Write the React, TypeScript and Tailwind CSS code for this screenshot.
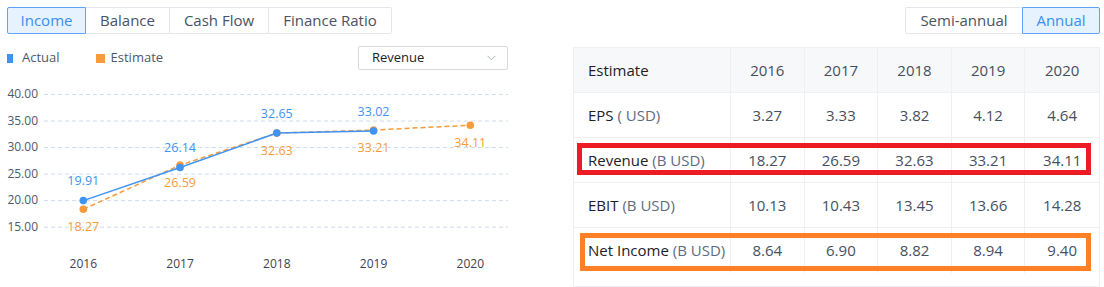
import React from "react";

const years = [2016, 2017, 2018, 2019, 2020];
const actual: (number | null)[] = [19.91, 26.14, 32.65, 33.02, null];
const estimate = [18.27, 26.59, 32.63, 33.21, 34.11];

const BLUE = "#3e93f5";
const ORANGE = "#f89b3c";

const px = (i: number) => 83.3 + 96.75 * i;
const py = (v: number) => 94 + (40 - v) * 5.307;

function Chart() {
  const ticks = [40, 35, 30, 25, 20, 15];
  const actPts = actual
    .map((v, i) => (v == null ? null : `${px(i)},${py(v)}`))
    .filter(Boolean)
    .join(" ");
  const estPts = estimate.map((v, i) => `${px(i)},${py(v)}`).join(" ");
  return (
    <svg width={512} height={217} className="-ml-[7px] block" style={{ fontFamily: "'Open Sans', sans-serif" }}>
      <g transform="translate(0,-70)">
        {ticks.map((t) => (
          <g key={t}>
            <line x1={44} x2={508} y1={py(t) + 0.5} y2={py(t) + 0.5} stroke="#cfdbea" strokeWidth={1} strokeDasharray="4 3" />
            <text x={38} y={py(t) + 4.3} textAnchor="end" fontSize={12} fill="#4e5969">
              {t.toFixed(2)}
            </text>
          </g>
        ))}
        {years.map((y, i) => (
          <text key={y} x={px(i)} y={268.3} textAnchor="middle" fontSize={12} fill="#3d4350">
            {y}
          </text>
        ))}
        <polyline points={estPts} fill="none" stroke={ORANGE} strokeWidth={1.5} strokeDasharray="5 3" />
        <polyline points={actPts} fill="none" stroke={BLUE} strokeWidth={1.5} />
        {estimate.map((v, i) => (
          <g key={"e" + i}>
            <circle cx={px(i)} cy={py(v)} r={3.8} fill={ORANGE} />
            <text x={px(i)} y={py(v) + 17.5 + 4.3} textAnchor="middle" fontSize={12.5} fill={ORANGE}>
              {v.toFixed(2)}
            </text>
          </g>
        ))}
        {actual.map((v, i) =>
          v == null ? null : (
            <g key={"a" + i}>
              <circle cx={px(i)} cy={py(v)} r={3.8} fill={BLUE} />
              <text x={px(i)} y={py(v) - 19.5 + 4.3} textAnchor="middle" fontSize={12.5} fill={BLUE}>
                {v.toFixed(2)}
              </text>
            </g>
          )
        )}
      </g>
    </svg>
  );
}

const rows: { label: string; unit: string; values: string[] }[] = [
  { label: "EPS", unit: " ( USD)", values: ["3.27", "3.33", "3.82", "4.12", "4.64"] },
  { label: "Revenue", unit: " (B USD)", values: ["18.27", "26.59", "32.63", "33.21", "34.11"] },
  { label: "EBIT", unit: " (B USD)", values: ["10.13", "10.43", "13.45", "13.66", "14.28"] },
  { label: "Net Income", unit: " (B USD)", values: ["8.64", "6.90", "8.82", "8.94", "9.40"] },
];

const tabs: { t: string; w: string }[] = [
  { t: "Income", w: "w-[79px]" },
  { t: "Balance", w: "w-[84px]" },
  { t: "Cash Flow", w: "w-[99px]" },
  { t: "Finance Ratio", w: "w-[123px]" },
];

export default function App() {
  return (
    <div className="relative w-[1104px] h-[287px] bg-white font-['Open_Sans',sans-serif] text-[#4e5969] overflow-hidden">
      <div className="flex justify-between pl-[7px] pr-[4px] pt-[7px]">
        <div className="flex">
          {tabs.map((tab, i) => (
            <div
              key={tab.t}
              className={
                tab.w +
                " h-[27px] flex items-center justify-center text-[15px] border " +
                (i === 0
                  ? "bg-[#e6f2fe] border-[#5ea6f5] text-[#3a8ef0] rounded-l-[2px]"
                  : "border-[#e5e6eb] border-l-0 text-[#4a5263]") +
                (i === tabs.length - 1 ? " rounded-r-[2px]" : "")
              }
            >
              {tab.t}
            </div>
          ))}
        </div>
        <div className="flex">
          <div className="h-[27px] w-[117px] flex items-center justify-center text-[15px] border border-[#e5e6eb] border-r-0 rounded-l-[2px] text-[#4a5263]">
            Semi-annual
          </div>
          <div className="h-[27px] w-[78px] flex items-center justify-center text-[15px] border border-[#5ea6f5] bg-[#e6f2fe] text-[#3a8ef0] rounded-r-[2px]">
            Annual
          </div>
        </div>
      </div>

      <div className="flex justify-between pl-[7px] pr-[4px] mt-[12px]">
        <div className="w-[503px]">
          <div className="h-[24px] flex items-center justify-between">
            <div className="flex items-center text-[13px] text-[#4e5969]">
              <span className="w-[6px] h-[9px] bg-[#3e93f5] mr-[9px]" />
              <span>Actual</span>
              <span className="w-[9px] h-[9px] bg-[#f89b3c] ml-[36px] mr-[6px]" />
              <span>Estimate</span>
            </div>
            <div className="w-[150px] h-[24px] mr-[2px] border border-[#d9d9d9] rounded-[2px] flex items-center justify-between pl-[13px] pr-[11px] text-[13px] text-[#1d2129]">
              <span>Revenue</span>
              <svg width="9" height="6" viewBox="0 0 9 6">
                <path d="M0.5 0.8 L4.5 4.8 L8.5 0.8" fill="none" stroke="#a9aeb8" strokeWidth="1" />
              </svg>
            </div>
          </div>
          <Chart />
        </div>

        <div className="w-[527px] mt-[1px] border border-[#eef0f3] text-[15px]">
          <div className="grid grid-cols-[157px_repeat(5,1fr)] h-[45px] bg-[#f7f8fa] border-b border-[#eef0f3]">
            <div className="flex items-center pl-[14px] text-[#1d2129] border-r border-[#eef0f3]">Estimate</div>
            {years.map((y, i) => (
              <div
                key={y}
                className={"flex items-center justify-center text-[#464f5f] " + (i < 4 ? "border-r border-[#eef0f3]" : "")}
              >
                {y}
              </div>
            ))}
          </div>
          {rows.map((r, ri) => (
            <div
              key={r.label}
              className={
                "grid grid-cols-[157px_repeat(5,1fr)] h-[45px] " +
                (ri < rows.length - 1 ? "border-b border-[#eef0f3]" : "h-[44px]")
              }
            >
              <div className="flex items-center pl-[14px] border-r border-[#eef0f3] whitespace-nowrap">
                <span className="text-[#1d2129]">{r.label}</span>
                <span className="text-[#5c6b84] whitespace-pre">{r.unit}</span>
              </div>
              {r.values.map((v, i) => (
                <div
                  key={i}
                  className={"flex items-center justify-center text-[#464f5f] " + (i < 4 ? "border-r border-[#eef0f3]" : "")}
                >
                  {v}
                </div>
              ))}
            </div>
          ))}
        </div>
      </div>

      <div className="absolute left-[577px] top-[143px] w-[514px] h-[32px] border-[5px] border-[#ed1c24] pointer-events-none" />
      <div className="absolute left-[580px] top-[233px] w-[511px] h-[38px] border-[5px] border-[#ff7f27] pointer-events-none" />
    </div>
  );
}
